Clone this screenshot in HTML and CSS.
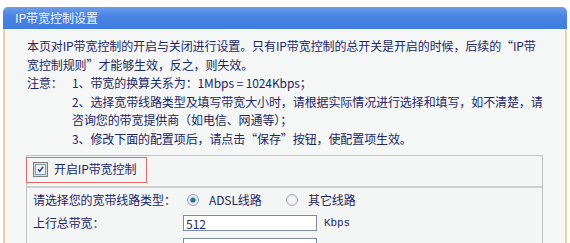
FILE: index.html
```html
<!DOCTYPE html>
<html lang="zh-CN">
<head>
    <meta charset="UTF-8">
    <title>IP带宽控制设置</title>
    <link rel="stylesheet" href="styles.css">
</head>
<body>

    <div class="panel">
        <div class="panel-title">IP带宽控制设置</div>
        <div class="panel-body">
            <p class="intro">本页对IP带宽控制的开启与关闭进行设置。只有IP带宽控制的总开关是开启的时候，后续的“IP带<br>宽控制规则”才能够生效，反之，则失效。</p>
            <div class="note">
                <span class="note-label">注意：</span>
                <div class="note-items">
                    <div>1、带宽的换算关系为：1Mbps = 1024Kbps；</div>
                    <div>2、选择宽带线路类型及填写带宽大小时，请根据实际情况进行选择和填写，如不清楚，请<br>咨询您的带宽提供商（如电信、网通等）；</div>
                    <div>3、修改下面的配置项后，请点击“保存”按钮，使配置项生效。</div>
                </div>
            </div>

            <div class="settings">
                <div class="settings-head">
                    <label class="highlight">
                        <!-- checked checkbox, XP look -->
                        <svg class="check" width="15" height="15" viewBox="0 0 15 15">
                            <rect x="0.5" y="0.5" width="14" height="14" fill="#dcdcd8" stroke="#7e7e7e"/>
                            <rect x="2.5" y="2.5" width="10" height="10" fill="#f2f4f8" stroke="#7f9db9"/>
                            <path d="M5 7.2 L6.8 9.3 L10.2 4.8" fill="none" stroke="#2a4ea8" stroke-width="1.6"/>
                        </svg>
                        开启IP带宽控制
                    </label>
                </div>
                <div class="settings-body">
                    <div class="row">
                        <span class="row-label">请选择您的宽带线路类型：</span>
                        <div class="row-value">
                            <span class="radio">
                                <svg width="12" height="12" viewBox="0 0 12 12">
                                    <circle cx="6" cy="6" r="5.5" fill="#e8ebee" stroke="#9aa3ad"/>
                                    <circle cx="6" cy="6" r="2.6" fill="#2f6f8c"/>
                                </svg>
                                ADSL线路
                            </span>
                            <span class="radio">
                                <svg width="12" height="12" viewBox="0 0 12 12">
                                    <circle cx="6" cy="6" r="5.5" fill="#e6e8ea" stroke="#a8aeb4"/>
                                    <circle cx="6" cy="6" r="3.4" fill="#f3f4f5"/>
                                </svg>
                                其它线路
                            </span>
                        </div>
                    </div>
                    <div class="row">
                        <span class="row-label">上行总带宽：</span>
                        <div class="row-value">
                            <input class="field" type="text" value="512">
                            <span class="unit">Kbps</span>
                        </div>
                    </div>
                    <div class="row">
                        <span class="row-label"></span>
                        <div class="row-value">
                            <input class="field" type="text">
                        </div>
                    </div>
                </div>
            </div>
        </div>
    </div>

</body>
</html>
```

FILE: styles.css
```css
body {
    margin: 0;
    background-color: #ffffff;
    font-family: "Noto Sans CJK SC", sans-serif;
    font-size: 12px;
    color: #1c2865;
}
.panel {
    margin: 7px 3px 0 3px;
}
.panel-title {
    height: 22px;
    line-height: 22px;
    padding-left: 12px;
    color: #eef3fc;
    background: linear-gradient(#6d9de8, #4a84e2 40%, #3f7bdf);
    border-radius: 5px 5px 0 0;
}
.panel-body {
    background-color: #f5f6f6;
    border-left: 2px solid #ead2a4;
    border-right: 2px solid #ead2a4;
    padding: 8px 22px 0 22px;
    height: 220px;
    line-height: 18.6px;
    letter-spacing: -0.1px;
}
.intro {
    margin: 0;
    white-space: nowrap;
}
.note {
    display: grid;
    grid-template-columns: 45px 1fr;
    white-space: nowrap;
}
.settings {
    margin-top: 6px;
    margin-left: -1px;
    border: 1px solid #c2c2c2;
    background-color: #f4f5f5;
}
.settings-head {
    height: 30px;
    border-bottom: 2px solid #cfcfcf;
    display: flex;
    align-items: flex-start;
}
.highlight {
    display: inline-flex;
    align-items: center;
    gap: 6px;
    margin: 1px 0 0 -1px;
    padding: 0 10px 0 6px;
    height: 24px;
    border: 1.5px solid #dd6b6b;
}
.settings-body {
    padding: 1px 6px 0 6px;
}
.row {
    display: flex;
    align-items: center;
    height: 23px;
}
.row-label {
    width: 150px;
}
.row-value {
    display: flex;
    align-items: center;
}
.radio {
    display: inline-flex;
    align-items: center;
    gap: 10px;
    margin-left: 4px;
    width: 95px;
}
.field {
    width: 128px;
    height: 12px;
    padding: 1px 2px;
    border: 1px solid #7b8aa6;
    font-family: "Noto Sans CJK SC", sans-serif;
    font-size: 12px;
    color: #1c2865;
}
.unit {
    margin-left: 7px;
    font-family: "Liberation Mono", monospace;
    font-size: 11px;
}
```
